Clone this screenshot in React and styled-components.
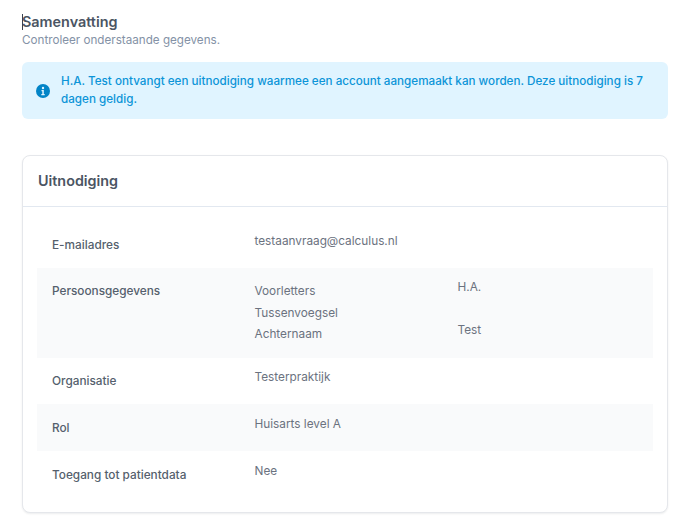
import React from 'react';
import styled, { createGlobalStyle } from 'styled-components';

const GlobalStyle = createGlobalStyle`
  html, body {
    margin: 0;
    background: #fff;
    font-family: Inter, "Liberation Sans", sans-serif;
  }
`;

const Page = styled.div`
  width: 646px;
  padding: 13px 16px 15px 22px;
`;

const Title = styled.h2`
  position: relative;
  margin: 0;
  font-size: 14.4px;
  line-height: 18px;
  font-weight: 600;
  color: #4b5563;
  &::before {
    content: '';
    position: absolute;
    left: 0;
    top: 1px;
    width: 1px;
    height: 16px;
    background: #374151;
  }
`;

const Subtitle = styled.p`
  margin: 0 0 13px;
  font-size: 11.67px;
  line-height: 18px;
  color: #8492a6;
`;

const Alert = styled.div`
  display: flex;
  align-items: center;
  gap: 11px;
  height: 57px;
  box-sizing: border-box;
  padding: 0 14px;
  border-radius: 6px;
  background: #e0f4ff;
  color: #0c94d8;
  font-size: 11.67px;
  font-weight: 500;
  line-height: 17.5px;
`;

const Card = styled.section`
  margin-top: 36px;
  border: 1px solid #e5e7eb;
  border-radius: 8px;
  background: #fff;
  box-shadow: 0 1px 2px rgba(15, 23, 42, 0.08);
  padding-bottom: 14px;
`;

const CardHeader = styled.h3`
  margin: 0 0 14px;
  padding: 0 15px;
  height: 50px;
  line-height: 50px;
  border-bottom: 1px solid #e2e8f0;
  font-size: 14.35px;
  font-weight: 600;
  color: #4b5563;
`;

const Row = styled.div`
  display: grid;
  grid-template-columns: 202.5px 203px 1fr;
  margin: 0 14px;
  padding: 0 15px;
  height: ${({ $height }) => $height || 46.7}px;
  background: ${({ $striped }) => ($striped ? '#f9fafb' : 'transparent')};
`;

const Label = styled.div`
  padding-top: 14.6px;
  font-size: 11.8px;
  font-weight: 500;
  line-height: 18px;
  color: #555f6d;
`;

const Value = styled.div`
  padding-top: 10.6px;
  font-size: 11.8px;
  line-height: 18px;
  color: #6b7280;
`;

const NameLabels = styled.div`
  display: flex;
  flex-direction: column;
  gap: 3.6px;
  padding-top: 14.5px;
  font-size: 11.8px;
  line-height: 18px;
  color: #6b7280;
`;

const NameValues = styled(NameLabels)`
  padding-top: 10px;
`;

const Blank = styled.span`
  height: 18px;
`;

const InfoIcon = () => (
  <svg width="14" height="14" viewBox="0 0 14 14" style={{ flex: 'none' }}>
    <circle cx="7" cy="7" r="7" fill="#0284c7" />
    <circle cx="7" cy="4" r="1.2" fill="#e0f4ff" />
    <path d="M5.5 6h2.3v4h.9v1.2H5.3V10h1V7.2h-.8z" fill="#e0f4ff" />
  </svg>
);

const App = () => (
  <Page>
    <GlobalStyle />
    <Title>Samenvatting</Title>
    <Subtitle>Controleer onderstaande gegevens.</Subtitle>
    <Alert>
      <InfoIcon />
      <span>
        H.A. Test ontvangt een uitnodiging waarmee een account aangemaakt kan worden. Deze
        uitnodiging is 7 dagen geldig.
      </span>
    </Alert>
    <Card>
      <CardHeader>Uitnodiging</CardHeader>
      <Row>
        <Label>E-mailadres</Label>
        <Value>testaanvraag@calculus.nl</Value>
      </Row>
      <Row $striped $height={90}>
        <Label>Persoonsgegevens</Label>
        <NameLabels>
          <span>Voorletters</span>
          <span>Tussenvoegsel</span>
          <span>Achternaam</span>
        </NameLabels>
        <NameValues>
          <span>H.A.</span>
          <Blank />
          <span>Test</span>
        </NameValues>
      </Row>
      <Row>
        <Label>Organisatie</Label>
        <Value>Testerpraktijk</Value>
      </Row>
      <Row $striped>
        <Label>Rol</Label>
        <Value>Huisarts level A</Value>
      </Row>
      <Row>
        <Label>Toegang tot patientdata</Label>
        <Value>Nee</Value>
      </Row>
    </Card>
  </Page>
);

export default App;
